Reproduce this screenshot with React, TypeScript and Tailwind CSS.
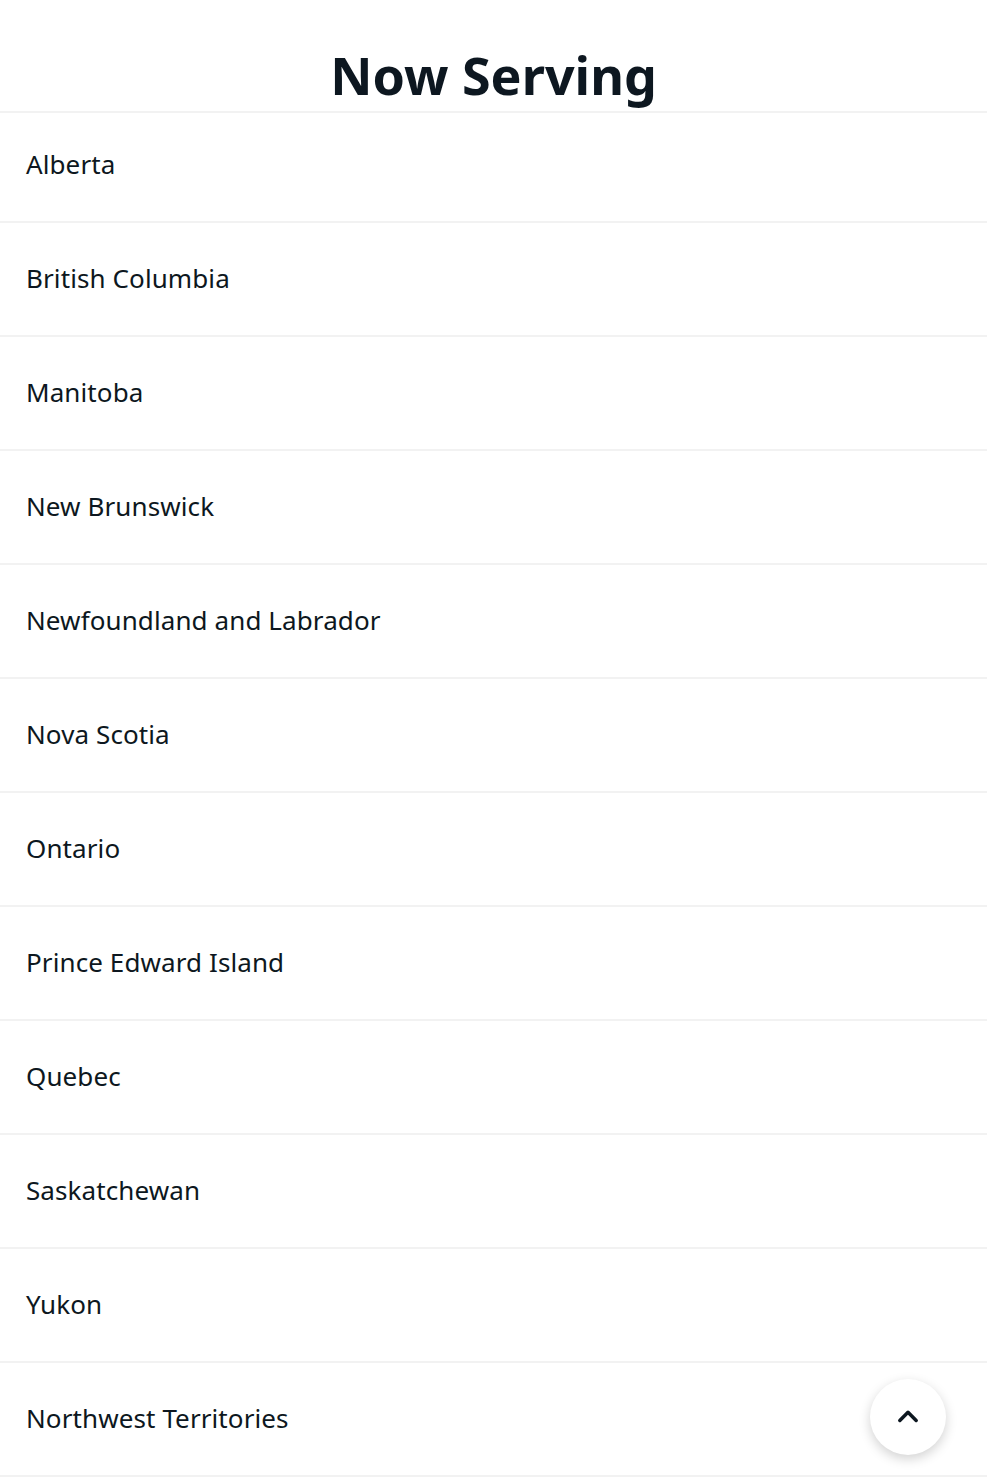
const provinces = [
  'Alberta',
  'British Columbia',
  'Manitoba',
  'New Brunswick',
  'Newfoundland and Labrador',
  'Nova Scotia',
  'Ontario',
  'Prince Edward Island',
  'Quebec',
  'Saskatchewan',
  'Yukon',
  'Northwest Territories',
]

export default function App() {
  return (
    <div className="min-h-screen bg-white text-[#0d1720] font-['Noto_Sans',sans-serif]">
      <h1 className="h-[113px] pt-[41px] text-center text-[52px] font-bold leading-[68px] border-b-2 border-[#f2f2f2]">
        Now Serving
      </h1>
      <ul>
        {provinces.map((name, i) => (
          <li
            key={name}
            className={`relative flex items-center px-[26px] border-b-2 border-[#f2f2f2] text-[26px] tracking-[0.1px] ${i === 0 ? 'h-[110px] pb-[6px]' : 'h-[114px] pb-[2px]'}`}
          >
            {name}
            {i === provinces.length - 1 && (
              <button className="absolute right-[41px] top-[16px] w-[76px] h-[76px] rounded-full bg-white shadow-[0_4px_12px_rgba(0,0,0,0.18)] flex items-center justify-center">
                <svg width="28" height="28" viewBox="0 0 24 24" fill="none" stroke="#0d1720" strokeWidth="3" strokeLinecap="round" strokeLinejoin="round">
                  <path d="M5 15l7-7 7 7" />
                </svg>
              </button>
            )}
          </li>
        ))}
      </ul>
    </div>
  )
}
